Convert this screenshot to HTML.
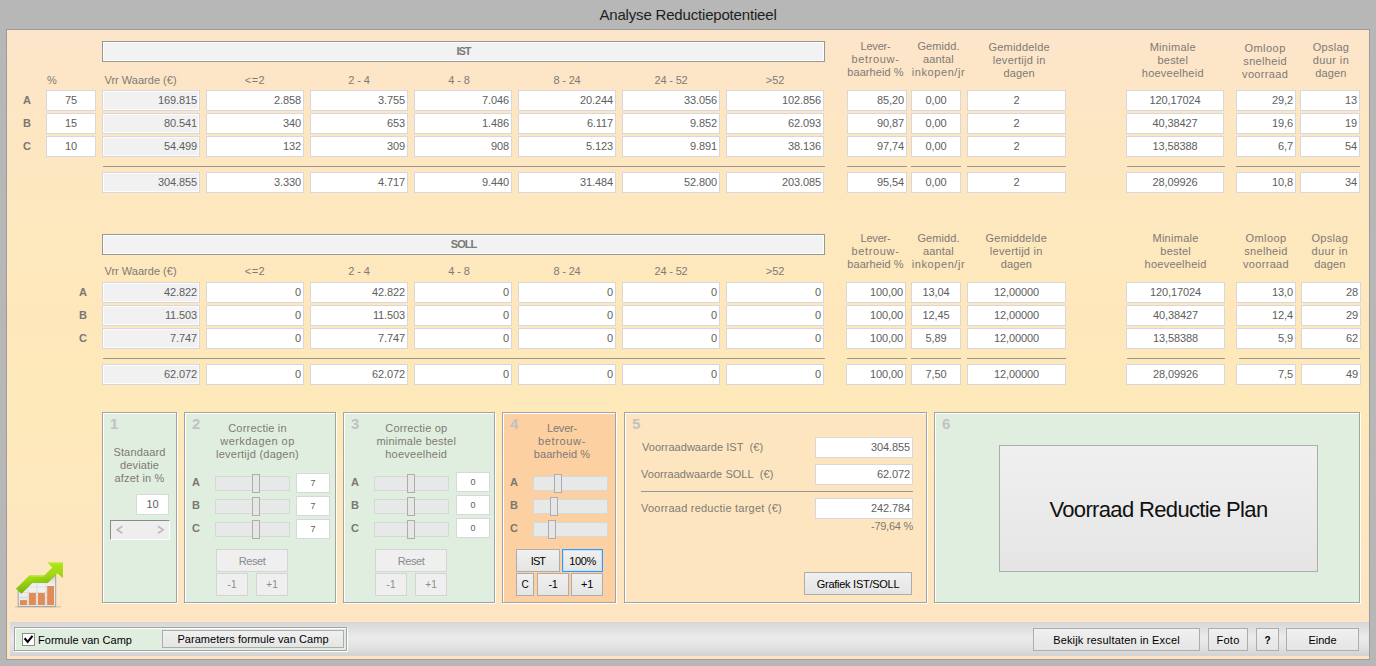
<!DOCTYPE html><html><head><meta charset="utf-8"><title>Analyse Reductiepotentieel</title><style>
*{box-sizing:border-box;margin:0;padding:0}
html,body{width:1376px;height:666px;overflow:hidden}
body{background:#b7b7b7;font-family:"Liberation Sans",sans-serif;font-size:11px;color:#5a5a5a;position:relative}
div{position:absolute;white-space:nowrap}
.title{left:0;top:6px;width:1376px;text-align:center;font-size:15px;color:#1e1e1e}
.main{left:6px;top:29px;width:1364px;height:631px;border:1px solid #9c9c9c;background:linear-gradient(#fce5ca 0%,#fde7c0 22%,#fee8bb 45%,#fee9ba 62%,#fde4c5 100%)}
.in{border:1px solid #d8d8dc;background:#fff;text-align:right;padding-right:2px;line-height:19px;letter-spacing:-0.12px;color:#5e5e5e}
.in.c{text-align:center;padding-right:0}
.ro{background:#f1f1f1;box-shadow:inset 0 0 0 1px #fcfcfc}
.hd{border:1px solid #979797;background:#f2f2f2;box-shadow:inset 0 0 0 1px #fff;text-align:center;font-weight:bold;color:#7a7a7a;line-height:18px}
.lb{color:#7e7a75;text-align:center;line-height:13px}
.ll{color:#7e7a75;line-height:13px;text-align:left}
.b{font-weight:bold;color:#7b7773;font-size:11px;line-height:13px}
.hr{height:1px;background:#969696}
.pn{border:1px solid #a3a3a3;box-shadow:1px 1px 0 #fff, inset 1px 1px 0 #fff}
.pg{background:#e0eedf}
.po{background:#fdd0a2}
.py{background:#fde6bf}
.num{font-weight:bold;font-size:15px;color:#c3c1c5;line-height:15px}
.tr{border:1px solid #d5d8d5;background:#e6e9e7}
.th{border:1px solid #adadad;background:#e6e6e6}
.bt{border:1px solid #adadad;background:linear-gradient(#f0f0f0,#e5e5e5);color:#000;text-align:center;line-height:21px}
.bd{border:1px solid #d2d5d1;background:#efefef;color:#8a8a8a;text-align:center;line-height:21px}
.bf{border:1px solid #3399ff;box-shadow:inset 0 0 0 1px #bfe0ff}
.bar{left:10px;top:622px;width:1359px;height:34px;background:linear-gradient(#d6d6d6 0%,#ebebeb 45%,#e4e4e4 70%,#d2d2d2 100%)}
.sc{border:1px solid;border-color:#8a8a8a #fff #fff #8a8a8a;background:#eee;color:#9a9a9a;font-size:13px;line-height:18px}
.cb{border:1px solid #8c8c8c;background:#fff}
</style></head><body>
<div class="title"><span style="letter-spacing:-0.18px">Analyse Reductiepotentieel</span></div>
<div class="main"></div>
<div class="ll" style="left:47px;top:74px;width:12px;letter-spacing:-0.5px">%</div>
<div class="hd" style="left:102px;top:41px;width:723px;height:21px;"><span style="letter-spacing:-0.96px">IST</span></div>
<div class="ll" style="left:104.5px;top:74px;width:98px;"><span style="letter-spacing:0.01px">Vrr Waarde (€)</span></div>
<div class="lb" style="left:155px;top:74px;width:200px;"><span style="letter-spacing:0.43px">&lt;=2</span></div>
<div class="lb" style="left:259px;top:74px;width:200px;"><span style="letter-spacing:-0.15px">2 - 4</span></div>
<div class="lb" style="left:359px;top:74px;width:200px;"><span style="letter-spacing:-0.10px">4 - 8</span></div>
<div class="lb" style="left:467px;top:74px;width:200px;"><span style="letter-spacing:-0.19px">8 - 24</span></div>
<div class="lb" style="left:571px;top:74px;width:200px;"><span style="letter-spacing:-0.16px">24 - 52</span></div>
<div class="lb" style="left:675px;top:74px;width:200px;"><span style="letter-spacing:-0.12px">&gt;52</span></div>
<div class="lb" style="left:775.5px;top:40px;width:200px;"><span style="letter-spacing:-0.20px">Lever-</span><br><span style="letter-spacing:0.65px">betrouw-</span><br><span style="letter-spacing:0.08px">baarheid %</span></div>
<div class="lb" style="left:838.5px;top:40px;width:200px;"><span style="letter-spacing:0.06px">Gemidd.</span><br><span style="letter-spacing:0.13px">aantal</span><br><span style="letter-spacing:0.60px">inkopen/jr</span></div>
<div class="lb" style="left:919.2px;top:41px;width:200px;"><span style="letter-spacing:0.21px">Gemiddelde</span><br><span style="letter-spacing:0.28px">levertijd in</span><br><span style="letter-spacing:0.14px">dagen</span></div>
<div class="lb" style="left:1072.8px;top:41px;width:200px;"><span style="letter-spacing:0.28px">Minimale</span><br><span style="letter-spacing:0.19px">bestel</span><br><span style="letter-spacing:0.24px">hoeveelheid</span></div>
<div class="lb" style="left:1165.1px;top:42px;width:200px;"><span style="letter-spacing:0.45px">Omloop</span><br><span style="letter-spacing:0.31px">snelheid</span><br><span style="letter-spacing:0.32px">voorraad</span></div>
<div class="lb" style="left:1231px;top:41px;width:200px;"><span style="letter-spacing:0.27px">Opslag</span><br><span style="letter-spacing:0.41px">duur in</span><br><span style="letter-spacing:0.14px">dagen</span></div>
<div class="b" style="left:23px;top:94px;width:12px;">A</div>
<div class="in c" style="left:46px;top:90px;width:50px;height:21px;">75</div>
<div class="in ro" style="left:102px;top:90px;width:98px;height:21px;">169.815</div>
<div class="in" style="left:206px;top:90px;width:98px;height:21px;">2.858</div>
<div class="in" style="left:310px;top:90px;width:98px;height:21px;">3.755</div>
<div class="in" style="left:414px;top:90px;width:98px;height:21px;">7.046</div>
<div class="in" style="left:518px;top:90px;width:98px;height:21px;">20.244</div>
<div class="in" style="left:622px;top:90px;width:98px;height:21px;">33.056</div>
<div class="in" style="left:726px;top:90px;width:98px;height:21px;">102.856</div>
<div class="in" style="left:847px;top:90px;width:60px;height:21px;">85,20</div>
<div class="in c" style="left:911px;top:90px;width:50px;height:21px;">0,00</div>
<div class="in c" style="left:967px;top:90px;width:99px;height:21px;">2</div>
<div class="in c" style="left:1126px;top:90px;width:98px;height:21px;">120,17024</div>
<div class="in" style="left:1236px;top:90px;width:60px;height:21px;">29,2</div>
<div class="in" style="left:1300px;top:90px;width:60px;height:21px;">13</div>
<div class="b" style="left:23px;top:117px;width:12px;">B</div>
<div class="in c" style="left:46px;top:113px;width:50px;height:21px;">15</div>
<div class="in ro" style="left:102px;top:113px;width:98px;height:21px;">80.541</div>
<div class="in" style="left:206px;top:113px;width:98px;height:21px;">340</div>
<div class="in" style="left:310px;top:113px;width:98px;height:21px;">653</div>
<div class="in" style="left:414px;top:113px;width:98px;height:21px;">1.486</div>
<div class="in" style="left:518px;top:113px;width:98px;height:21px;">6.117</div>
<div class="in" style="left:622px;top:113px;width:98px;height:21px;">9.852</div>
<div class="in" style="left:726px;top:113px;width:98px;height:21px;">62.093</div>
<div class="in" style="left:847px;top:113px;width:60px;height:21px;">90,87</div>
<div class="in c" style="left:911px;top:113px;width:50px;height:21px;">0,00</div>
<div class="in c" style="left:967px;top:113px;width:99px;height:21px;">2</div>
<div class="in c" style="left:1126px;top:113px;width:98px;height:21px;">40,38427</div>
<div class="in" style="left:1236px;top:113px;width:60px;height:21px;">19,6</div>
<div class="in" style="left:1300px;top:113px;width:60px;height:21px;">19</div>
<div class="b" style="left:23px;top:140px;width:12px;">C</div>
<div class="in c" style="left:46px;top:136px;width:50px;height:21px;">10</div>
<div class="in ro" style="left:102px;top:136px;width:98px;height:21px;">54.499</div>
<div class="in" style="left:206px;top:136px;width:98px;height:21px;">132</div>
<div class="in" style="left:310px;top:136px;width:98px;height:21px;">309</div>
<div class="in" style="left:414px;top:136px;width:98px;height:21px;">908</div>
<div class="in" style="left:518px;top:136px;width:98px;height:21px;">5.123</div>
<div class="in" style="left:622px;top:136px;width:98px;height:21px;">9.891</div>
<div class="in" style="left:726px;top:136px;width:98px;height:21px;">38.136</div>
<div class="in" style="left:847px;top:136px;width:60px;height:21px;">97,74</div>
<div class="in c" style="left:911px;top:136px;width:50px;height:21px;">0,00</div>
<div class="in c" style="left:967px;top:136px;width:99px;height:21px;">2</div>
<div class="in c" style="left:1126px;top:136px;width:98px;height:21px;">13,58388</div>
<div class="in" style="left:1236px;top:136px;width:60px;height:21px;">6,7</div>
<div class="in" style="left:1300px;top:136px;width:60px;height:21px;">54</div>
<div class="in ro" style="left:102px;top:172px;width:98px;height:21px;">304.855</div>
<div class="in" style="left:206px;top:172px;width:98px;height:21px;">3.330</div>
<div class="in" style="left:310px;top:172px;width:98px;height:21px;">4.717</div>
<div class="in" style="left:414px;top:172px;width:98px;height:21px;">9.440</div>
<div class="in" style="left:518px;top:172px;width:98px;height:21px;">31.484</div>
<div class="in" style="left:622px;top:172px;width:98px;height:21px;">52.800</div>
<div class="in" style="left:726px;top:172px;width:98px;height:21px;">203.085</div>
<div class="in" style="left:847px;top:172px;width:60px;height:21px;">95,54</div>
<div class="in c" style="left:911px;top:172px;width:50px;height:21px;">0,00</div>
<div class="in c" style="left:967px;top:172px;width:99px;height:21px;">2</div>
<div class="in c" style="left:1126px;top:172px;width:98px;height:21px;">28,09926</div>
<div class="in" style="left:1236px;top:172px;width:60px;height:21px;">10,8</div>
<div class="in" style="left:1300px;top:172px;width:60px;height:21px;">34</div>
<div class="hr" style="left:103px;top:166px;width:722px;height:1px;"></div>
<div class="hr" style="left:847px;top:166px;width:60px;height:1px;"></div>
<div class="hr" style="left:911px;top:166px;width:50px;height:1px;"></div>
<div class="hr" style="left:967px;top:166px;width:99px;height:1px;"></div>
<div class="hr" style="left:1127px;top:166px;width:98px;height:1px;"></div>
<div class="hr" style="left:1236px;top:166px;width:124px;height:1px;"></div>
<div class="hd" style="left:102px;top:234px;width:723px;height:21px;"><span style="letter-spacing:-0.96px">SOLL</span></div>
<div class="ll" style="left:104.5px;top:265px;width:98px;"><span style="letter-spacing:0.01px">Vrr Waarde (€)</span></div>
<div class="lb" style="left:155px;top:265px;width:200px;"><span style="letter-spacing:0.43px">&lt;=2</span></div>
<div class="lb" style="left:259px;top:265px;width:200px;"><span style="letter-spacing:-0.15px">2 - 4</span></div>
<div class="lb" style="left:359px;top:265px;width:200px;"><span style="letter-spacing:-0.10px">4 - 8</span></div>
<div class="lb" style="left:467px;top:265px;width:200px;"><span style="letter-spacing:-0.19px">8 - 24</span></div>
<div class="lb" style="left:571px;top:265px;width:200px;"><span style="letter-spacing:-0.16px">24 - 52</span></div>
<div class="lb" style="left:675px;top:265px;width:200px;"><span style="letter-spacing:-0.12px">&gt;52</span></div>
<div class="lb" style="left:775.5px;top:232px;width:200px;"><span style="letter-spacing:-0.20px">Lever-</span><br><span style="letter-spacing:0.65px">betrouw-</span><br><span style="letter-spacing:0.08px">baarheid %</span></div>
<div class="lb" style="left:838.5px;top:232px;width:200px;"><span style="letter-spacing:0.06px">Gemidd.</span><br><span style="letter-spacing:0.13px">aantal</span><br><span style="letter-spacing:0.60px">inkopen/jr</span></div>
<div class="lb" style="left:916.3px;top:232px;width:200px;"><span style="letter-spacing:0.21px">Gemiddelde</span><br><span style="letter-spacing:0.28px">levertijd in</span><br><span style="letter-spacing:0.14px">dagen</span></div>
<div class="lb" style="left:1075.6px;top:232px;width:200px;"><span style="letter-spacing:0.28px">Minimale</span><br><span style="letter-spacing:0.19px">bestel</span><br><span style="letter-spacing:0.24px">hoeveelheid</span></div>
<div class="lb" style="left:1166px;top:232px;width:200px;"><span style="letter-spacing:0.45px">Omloop</span><br><span style="letter-spacing:0.31px">snelheid</span><br><span style="letter-spacing:0.32px">voorraad</span></div>
<div class="lb" style="left:1229.8px;top:232px;width:200px;"><span style="letter-spacing:0.27px">Opslag</span><br><span style="letter-spacing:0.41px">duur in</span><br><span style="letter-spacing:0.14px">dagen</span></div>
<div class="b" style="left:79px;top:286px;width:12px;">A</div>
<div class="in ro" style="left:102px;top:282px;width:98px;height:21px;">42.822</div>
<div class="in" style="left:206px;top:282px;width:98px;height:21px;">0</div>
<div class="in" style="left:310px;top:282px;width:98px;height:21px;">42.822</div>
<div class="in" style="left:414px;top:282px;width:98px;height:21px;">0</div>
<div class="in" style="left:518px;top:282px;width:98px;height:21px;">0</div>
<div class="in" style="left:622px;top:282px;width:98px;height:21px;">0</div>
<div class="in" style="left:726px;top:282px;width:98px;height:21px;">0</div>
<div class="in" style="left:846px;top:282px;width:60px;height:21px;">100,00</div>
<div class="in c" style="left:911px;top:282px;width:50px;height:21px;">13,04</div>
<div class="in c" style="left:967px;top:282px;width:99px;height:21px;">12,00000</div>
<div class="in c" style="left:1126px;top:282px;width:99px;height:21px;">120,17024</div>
<div class="in" style="left:1236px;top:282px;width:60px;height:21px;">13,0</div>
<div class="in" style="left:1301px;top:282px;width:60px;height:21px;">28</div>
<div class="b" style="left:79px;top:309px;width:12px;">B</div>
<div class="in ro" style="left:102px;top:305px;width:98px;height:21px;">11.503</div>
<div class="in" style="left:206px;top:305px;width:98px;height:21px;">0</div>
<div class="in" style="left:310px;top:305px;width:98px;height:21px;">11.503</div>
<div class="in" style="left:414px;top:305px;width:98px;height:21px;">0</div>
<div class="in" style="left:518px;top:305px;width:98px;height:21px;">0</div>
<div class="in" style="left:622px;top:305px;width:98px;height:21px;">0</div>
<div class="in" style="left:726px;top:305px;width:98px;height:21px;">0</div>
<div class="in" style="left:846px;top:305px;width:60px;height:21px;">100,00</div>
<div class="in c" style="left:911px;top:305px;width:50px;height:21px;">12,45</div>
<div class="in c" style="left:967px;top:305px;width:99px;height:21px;">12,00000</div>
<div class="in c" style="left:1126px;top:305px;width:99px;height:21px;">40,38427</div>
<div class="in" style="left:1236px;top:305px;width:60px;height:21px;">12,4</div>
<div class="in" style="left:1301px;top:305px;width:60px;height:21px;">29</div>
<div class="b" style="left:79px;top:332px;width:12px;">C</div>
<div class="in ro" style="left:102px;top:328px;width:98px;height:21px;">7.747</div>
<div class="in" style="left:206px;top:328px;width:98px;height:21px;">0</div>
<div class="in" style="left:310px;top:328px;width:98px;height:21px;">7.747</div>
<div class="in" style="left:414px;top:328px;width:98px;height:21px;">0</div>
<div class="in" style="left:518px;top:328px;width:98px;height:21px;">0</div>
<div class="in" style="left:622px;top:328px;width:98px;height:21px;">0</div>
<div class="in" style="left:726px;top:328px;width:98px;height:21px;">0</div>
<div class="in" style="left:846px;top:328px;width:60px;height:21px;">100,00</div>
<div class="in c" style="left:911px;top:328px;width:50px;height:21px;">5,89</div>
<div class="in c" style="left:967px;top:328px;width:99px;height:21px;">12,00000</div>
<div class="in c" style="left:1126px;top:328px;width:99px;height:21px;">13,58388</div>
<div class="in" style="left:1236px;top:328px;width:60px;height:21px;">5,9</div>
<div class="in" style="left:1301px;top:328px;width:60px;height:21px;">62</div>
<div class="in ro" style="left:102px;top:364px;width:98px;height:21px;">62.072</div>
<div class="in" style="left:206px;top:364px;width:98px;height:21px;">0</div>
<div class="in" style="left:310px;top:364px;width:98px;height:21px;">62.072</div>
<div class="in" style="left:414px;top:364px;width:98px;height:21px;">0</div>
<div class="in" style="left:518px;top:364px;width:98px;height:21px;">0</div>
<div class="in" style="left:622px;top:364px;width:98px;height:21px;">0</div>
<div class="in" style="left:726px;top:364px;width:98px;height:21px;">0</div>
<div class="in" style="left:846px;top:364px;width:60px;height:21px;">100,00</div>
<div class="in c" style="left:911px;top:364px;width:50px;height:21px;">7,50</div>
<div class="in c" style="left:967px;top:364px;width:99px;height:21px;">12,00000</div>
<div class="in c" style="left:1126px;top:364px;width:99px;height:21px;">28,09926</div>
<div class="in" style="left:1236px;top:364px;width:60px;height:21px;">7,5</div>
<div class="in" style="left:1301px;top:364px;width:60px;height:21px;">49</div>
<div class="hr" style="left:103px;top:358px;width:722px;height:1px;"></div>
<div class="hr" style="left:847px;top:358px;width:60px;height:1px;"></div>
<div class="hr" style="left:911px;top:358px;width:50px;height:1px;"></div>
<div class="hr" style="left:967px;top:358px;width:99px;height:1px;"></div>
<div class="hr" style="left:1127px;top:358px;width:98px;height:1px;"></div>
<div class="hr" style="left:1239px;top:358px;width:121px;height:1px;"></div>
<div class="pn pg" style="left:102px;top:412px;width:75px;height:191px;"></div>
<div class="num" style="left:110px;top:416px;width:12px;">1</div>
<div class="pn pg" style="left:184px;top:412px;width:152px;height:191px;"></div>
<div class="num" style="left:192px;top:416px;width:12px;">2</div>
<div class="pn pg" style="left:343px;top:412px;width:152px;height:191px;"></div>
<div class="num" style="left:351px;top:416px;width:12px;">3</div>
<div class="pn po" style="left:502px;top:412px;width:114px;height:191px;"></div>
<div class="num" style="left:510px;top:416px;width:12px;">4</div>
<div class="pn py" style="left:624px;top:412px;width:303px;height:191px;"></div>
<div class="num" style="left:632px;top:416px;width:12px;">5</div>
<div class="pn pg" style="left:934px;top:412px;width:426px;height:191px;"></div>
<div class="num" style="left:942px;top:416px;width:12px;">6</div>
<div class="lb" style="left:39.5px;top:446px;width:200px;"><span style="letter-spacing:0.16px">Standaard</span><br><span style="letter-spacing:0.13px">deviatie</span><br><span style="letter-spacing:0.17px">afzet in %</span></div>
<div class="in c" style="left:136px;top:494px;width:33px;height:21px;">10</div>
<div class="sc" style="left:110px;top:520px;width:60px;height:20px;"><svg width="58" height="18" viewBox="0 0 58 18" style="position:absolute;left:0;top:0"><path d="M11.300 5.200 L6.200 8.700 L11.300 12.200 M47 5.200 L52.100 8.700 L47 12.200" fill="none" stroke="#bcbcbc" stroke-width="1.700"/></svg></div>
<div class="lb" style="left:157.5px;top:422px;width:200px;"><span style="letter-spacing:0.19px">Correctie in</span><br><span style="letter-spacing:0.45px">werkdagen op</span><br><span style="letter-spacing:0.24px">levertijd (dagen)</span></div>
<div class="b" style="left:192px;top:476px;width:12px;">A</div>
<div class="tr" style="left:215px;top:476px;width:75px;height:15px;"></div>
<div class="th" style="left:252px;top:474px;width:8px;height:19px;"></div>
<div class="in c" style="left:296px;top:473px;width:34px;height:20px;font-size:9px;line-height:18px">7</div>
<div class="b" style="left:192px;top:499px;width:12px;">B</div>
<div class="tr" style="left:215px;top:499px;width:75px;height:15px;"></div>
<div class="th" style="left:252px;top:497px;width:8px;height:19px;"></div>
<div class="in c" style="left:296px;top:496px;width:34px;height:20px;font-size:9px;line-height:18px">7</div>
<div class="b" style="left:192px;top:522px;width:12px;">C</div>
<div class="tr" style="left:215px;top:522px;width:75px;height:15px;"></div>
<div class="th" style="left:252px;top:520px;width:8px;height:19px;"></div>
<div class="in c" style="left:296px;top:519px;width:34px;height:20px;font-size:9px;line-height:18px">7</div>
<div class="bd" style="left:216px;top:549px;width:72px;height:23px;line-height:22px"><span style="letter-spacing:-0.40px">Reset</span></div>
<div class="bd" style="left:216px;top:573px;width:32px;height:23px;font-size:10px">-1</div>
<div class="bd" style="left:256px;top:573px;width:32px;height:23px;font-size:10px">+1</div>
<div class="lb" style="left:316.25px;top:422px;width:200px;"><span style="letter-spacing:0.17px">Correctie op</span><br><span style="letter-spacing:0.22px">minimale bestel</span><br><span style="letter-spacing:0.24px">hoeveelheid</span></div>
<div class="b" style="left:351px;top:476px;width:12px;">A</div>
<div class="tr" style="left:374px;top:476px;width:75px;height:15px;"></div>
<div class="th" style="left:407px;top:474px;width:8px;height:19px;"></div>
<div class="in c" style="left:456px;top:472px;width:34px;height:20px;font-size:9px;line-height:18px">0</div>
<div class="b" style="left:351px;top:499px;width:12px;">B</div>
<div class="tr" style="left:374px;top:499px;width:75px;height:15px;"></div>
<div class="th" style="left:407px;top:497px;width:8px;height:19px;"></div>
<div class="in c" style="left:456px;top:495px;width:34px;height:20px;font-size:9px;line-height:18px">0</div>
<div class="b" style="left:351px;top:522px;width:12px;">C</div>
<div class="tr" style="left:374px;top:522px;width:75px;height:15px;"></div>
<div class="th" style="left:407px;top:520px;width:8px;height:19px;"></div>
<div class="in c" style="left:456px;top:518px;width:34px;height:20px;font-size:9px;line-height:18px">0</div>
<div class="bd" style="left:375px;top:549px;width:72px;height:23px;line-height:22px"><span style="letter-spacing:-0.40px">Reset</span></div>
<div class="bd" style="left:375px;top:573px;width:32px;height:23px;font-size:10px">-1</div>
<div class="bd" style="left:415px;top:573px;width:32px;height:23px;font-size:10px">+1</div>
<div class="lb" style="left:462px;top:422px;width:200px;"><span style="letter-spacing:-0.20px">Lever-</span><br><span style="letter-spacing:0.65px">betrouw-</span><br><span style="letter-spacing:0.08px">baarheid %</span></div>
<div class="b" style="left:510px;top:476px;width:12px;">A</div>
<div class="tr" style="left:533px;top:476px;width:75px;height:15px;"></div>
<div class="th" style="left:554px;top:474px;width:8px;height:19px;"></div>
<div class="b" style="left:510px;top:499px;width:12px;">B</div>
<div class="tr" style="left:533px;top:499px;width:75px;height:15px;"></div>
<div class="th" style="left:550px;top:497px;width:8px;height:19px;"></div>
<div class="b" style="left:510px;top:522px;width:12px;">C</div>
<div class="tr" style="left:533px;top:522px;width:75px;height:15px;"></div>
<div class="th" style="left:548px;top:520px;width:8px;height:19px;"></div>
<div class="bt" style="left:516px;top:549px;width:44px;height:23px;letter-spacing:-0.9px;line-height:22px">IST</div>
<div class="bt bf" style="left:562px;top:549px;width:41px;height:23px;line-height:22px"><span style="letter-spacing:-0.35px">100%</span></div>
<div class="bt" style="left:516px;top:573px;width:18px;height:23px;font-size:10px">C</div>
<div class="bt" style="left:537px;top:573px;width:32px;height:23px;letter-spacing:-0.3px">-1</div>
<div class="bt" style="left:571px;top:573px;width:32px;height:23px;letter-spacing:-0.3px">+1</div>
<div class="ll" style="left:642px;top:441px;width:150px;"><span style="letter-spacing:0.03px">Voorraadwaarde IST&nbsp; (€)</span></div>
<div class="ll" style="left:641px;top:468px;width:150px;"><span style="letter-spacing:0.04px">Voorraadwaarde SOLL&nbsp; (€)</span></div>
<div class="ll" style="left:641px;top:502px;width:150px;"><span style="letter-spacing:0.23px">Voorraad reductie target (€)</span></div>
<div class="in" style="left:815px;top:437px;width:98px;height:21px;">304.855</div>
<div class="in" style="left:815px;top:464px;width:98px;height:21px;">62.072</div>
<div class="in" style="left:815px;top:498px;width:98px;height:21px;">242.784</div>
<div class="hr" style="left:641px;top:491px;width:272px;height:1px;"></div>
<div class="ll" style="left:813px;top:520px;width:100px;text-align:right"><span style="letter-spacing:-0.25px">-79,64 %</span></div>
<div class="bt" style="left:804px;top:572px;width:108px;height:23px;line-height:23px"><span style="letter-spacing:-0.27px">Grafiek IST/SOLL</span></div>
<div class="bt" style="left:999px;top:445px;width:319px;height:127px;font-size:22px;line-height:128px;color:#111"><span style="letter-spacing:-0.65px">Voorraad Reductie Plan</span></div>
<svg style="position:absolute;left:8px;top:554px" width="66" height="60" viewBox="0 0 66 60">
<defs><linearGradient id="ga" x1="0.2" y1="0" x2="0.5" y2="1"><stop offset="0" stop-color="#b9ea20"/><stop offset="0.5" stop-color="#a2d912"/><stop offset="1" stop-color="#6aa80e"/></linearGradient>
<linearGradient id="gb" x1="0" y1="0" x2="0" y2="1"><stop offset="0" stop-color="#cfcfcf"/><stop offset="0.35" stop-color="#f4f4f4"/><stop offset="1" stop-color="#e4e4e4"/></linearGradient></defs>
<rect x="7" y="52.3" width="46" height="1.2" fill="#a89880" opacity=".45"/>
<path d="M10.2 52.6 L10.2 36 L24 28 L40 28 L47.7 21 L47.7 52.6 Z" fill="url(#gb)" stroke="#9c9c9c" stroke-width="0.9"/>
<path d="M10.5 43.5h37M10.5 47.8h37M10.5 38.5h37M10.5 33h37M20 30v22M29 28v24M38.2 28v24" stroke="#d0d0d0" stroke-width=".6" fill="none"/>
<rect x="12" y="46.1" width="6.9" height="4.9" fill="#e18b56"/><rect x="21" y="39" width="6.9" height="12" fill="#e18b56"/><rect x="30" y="39" width="6.9" height="12" fill="#e18b56"/><rect x="39.2" y="32" width="6.8" height="19" fill="#e18b56"/>
<path d="M7.9 34.7 L13.5 39.7 L24.4 29 L39.7 29 L49.4 19.2 L54.8 24 L55 8.3 L39.2 8.3 L44.3 13.5 L36.5 21.3 L21.6 21.3 Z" fill="url(#ga)"/>
<path d="M22 22 L36.8 22 M40.500 8.900 L54.500 8.900" stroke="#d4f56a" stroke-width="0.8" opacity=".8" fill="none"/>
</svg>

<div class="bar"></div>
<div class="pn pg" style="left:14px;top:627px;width:333px;height:24px;"></div>
<div class="cb" style="left:22px;top:633px;width:13px;height:13px;"><svg width="11" height="11" viewBox="0 0 11 11" style="position:absolute;left:0;top:0"><path d="M1.600 4.300 L4.700 7.900 L9.500 1.800" fill="none" stroke="#000" stroke-width="2.100"/></svg></div>
<div class="ll" style="left:38px;top:634px;width:100px;color:#000"><span style="letter-spacing:0.03px">Formule van Camp</span></div>
<div class="bt" style="left:162px;top:630px;width:182px;height:18px;line-height:16px"><span style="letter-spacing:0.05px">Parameters formule van Camp</span></div>
<div class="bt" style="left:1033px;top:628px;width:167px;height:23px;line-height:23px"><span style="letter-spacing:0.17px">Bekijk resultaten in Excel</span></div>
<div class="bt" style="left:1208px;top:628px;width:40px;height:23px;line-height:23px"><span style="letter-spacing:0.25px">Foto</span></div>
<div class="bt" style="left:1256px;top:628px;width:23px;height:23px;line-height:23px;font-size:10px;font-weight:bold">?</div>
<div class="bt" style="left:1286px;top:628px;width:73px;height:23px;line-height:23px"><span style="letter-spacing:0.02px">Einde</span></div>
</body></html>
